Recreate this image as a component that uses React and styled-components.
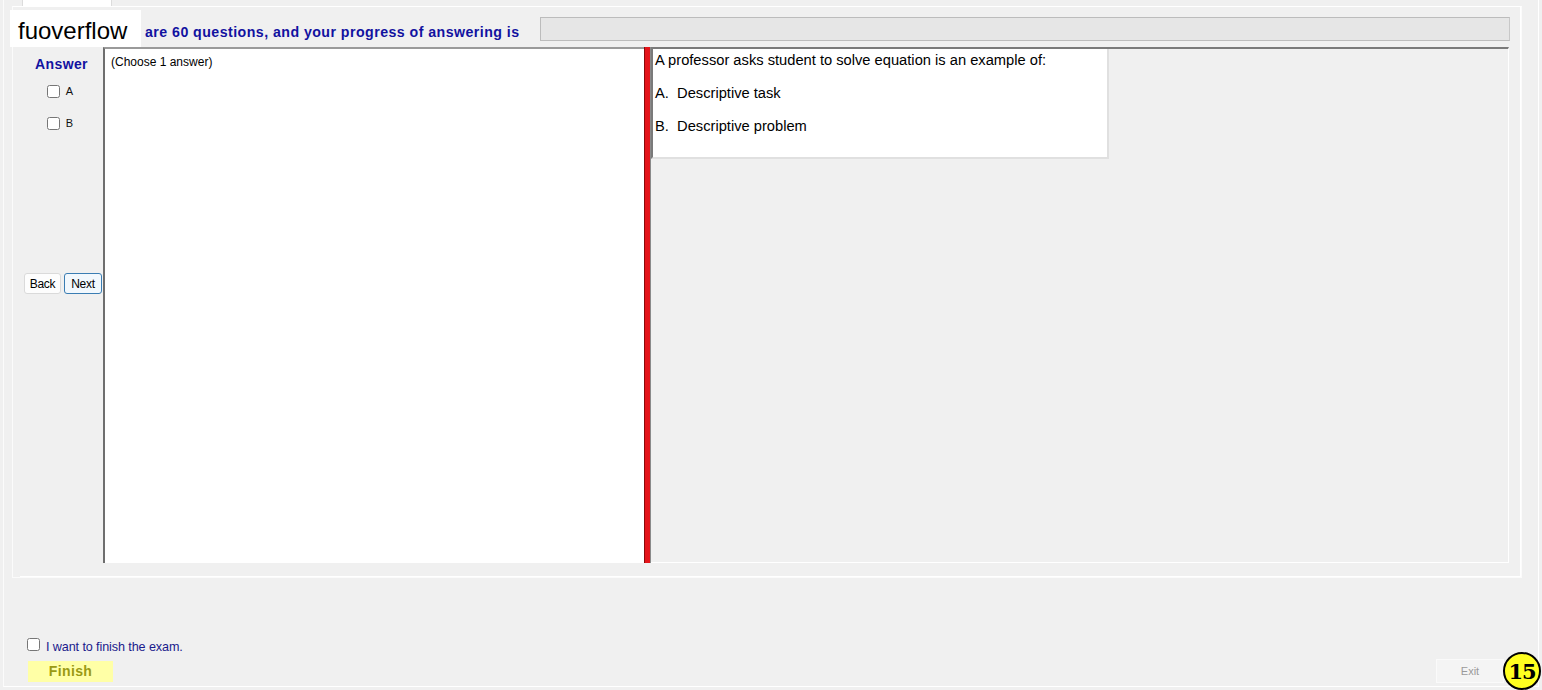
import React from "react";
import styled, { createGlobalStyle } from "styled-components";

const Global = createGlobalStyle`
    html, body {
        margin: 0;
        padding: 0;
        background: #f0f0f0;
        font-family: "Liberation Sans", Arial, sans-serif;
    }
`;

function App() {
    return (
        <Page>
            <Global />
            <Frame>
                <TabStrip>
                    <Tab />
                </TabStrip>
                <TabPanel>
                    <Group>
                        <HeaderRow>
                            <Title>are 60 questions, and your progress of answering is</Title>
                            <Progress />
                        </HeaderRow>
                        <Main>
                            <AnswerColumn>
                                <AnswerLabel>Answer</AnswerLabel>
                                <Choice>
                                    <Box type="checkbox" />
                                    <span>A</span>
                                </Choice>
                                <Choice>
                                    <Box type="checkbox" />
                                    <span>B</span>
                                </Choice>
                                <NavRow>
                                    <NavButton>Back</NavButton>
                                    <NavButton focused>Next</NavButton>
                                </NavRow>
                            </AnswerColumn>
                            <AnswerBox>(Choose 1 answer)</AnswerBox>
                            <Splitter />
                            <QuestionPane>
                                <QuestionBox>
                                    <QLine>A professor asks student to solve equation is an example of:</QLine>
                                    <QLine>A.&nbsp;&nbsp;Descriptive task</QLine>
                                    <QLine>B.&nbsp;&nbsp;Descriptive problem</QLine>
                                </QuestionBox>
                            </QuestionPane>
                        </Main>
                    </Group>
                </TabPanel>
                <Footer>
                    <FinishCheck>
                        <Box type="checkbox" />
                        <span>I want to finish the exam.</span>
                    </FinishCheck>
                    <FooterRow>
                        <FinishButton>Finish</FinishButton>
                        <ExitButton>Exit</ExitButton>
                    </FooterRow>
                </Footer>
            </Frame>
            <Watermark>fuoverflow</Watermark>
            <Badge>15</Badge>
        </Page>
    );
}

export default App;

const Page = styled.div`
    position: relative;
    width: 1542px;
    height: 690px;
    background: #f0f0f0;
    overflow: hidden;
`;

const Frame = styled.div`
    margin-left: 3px;
    width: 1534px;
    height: 686px;
    border-left: 1px solid #fbfbfb;
    border-right: 1px solid #ffffff;
    border-bottom: 1px solid #ffffff;
    display: flex;
    flex-direction: column;
`;

const TabStrip = styled.div`
    height: 6px;
    padding-left: 18px;
    display: flex;
`;

const Tab = styled.div`
    width: 88px;
    height: 6px;
    background: #ffffff;
    border-left: 1px solid #dcdcdc;
    border-right: 1px solid #dcdcdc;
`;

const TabPanel = styled.div`
    margin-left: 8px;
    width: 1508px;
    height: 570px;
    border: 1px solid #fbfbfb;
    border-top-color: #ffffff;
    display: flex;
`;

const Group = styled.div`
    margin-left: 7px;
    flex: 1;
    display: flex;
    flex-direction: column;
    border-bottom: 1px solid #ffffff;
    border-right: 1px solid #ffffff;
`;

const HeaderRow = styled.div`
    height: 40px;
    display: flex;
    align-items: center;
    padding-left: 125px;
`;

const Title = styled.div`
    font-size: 14.2px;
    font-weight: bold;
    letter-spacing: 0.45px;
    color: #1212a0;
    margin-top: 10px;
    width: 395px;
    white-space: nowrap;
`;

const Progress = styled.div`
    margin-top: 4px;
    width: 968px;
    height: 22px;
    background: #e6e6e6;
    border: 1px solid #bcbcbc;
    border-right-color: #c8c8c8;
`;

const Main = styled.div`
    display: flex;
    height: 516px;
    margin-right: 11px;
`;

const AnswerColumn = styled.div`
    width: 83px;
    display: flex;
    flex-direction: column;
    align-items: center;
`;

const AnswerLabel = styled.div`
    margin-top: 9px;
    font-size: 14px;
    font-weight: bold;
    letter-spacing: 0.4px;
    color: #1212a0;
`;

const Box = styled.input`
    width: 13px;
    height: 13px;
    margin: 0;
`;

const Choice = styled.label`
    display: flex;
    align-items: center;
    gap: 6px;
    font-size: 11px;
    color: #111;
    margin-top: 9px;
    height: 20px;
    margin-right: 3px;
    & + & {
        margin-top: 12px;
    }
`;

const NavRow = styled.div`
    margin-top: 140px;
    display: flex;
    gap: 3px;
    align-self: flex-start;
    padding-left: 4px;
`;

const NavButton = styled.button`
    height: 21px;
    padding: 0 4px;
    font-family: "Liberation Sans", Arial, sans-serif;
    font-size: 12px;
    letter-spacing: -0.3px;
    color: #000;
    background: ${(p) => (p.focused ? "#f2f8fd" : "#fdfdfd")};
    border: 1px solid ${(p) => (p.focused ? "#3a7db3" : "#dadada")};
    border-radius: 3px;
    width: ${(p) => (p.focused ? "38px" : "37px")};
`;

const AnswerBox = styled.div`
    background: #ffffff;
    border-left: 2px solid #6e6e6e;
    border-top: 2px solid #9a9a9a;
    padding: 6px 0 0 6px;
    font-size: 12px;
    color: #000;
    box-sizing: border-box;
    width: 541px;
`;

const Splitter = styled.div`
    width: 7px;
    background: #e4141a;
    border-left: 1px solid #8a0a0a;
    border-right: 1px solid #8a8a8a;
    box-sizing: border-box;
`;

const QuestionPane = styled.div`
    flex: 1;
    border-top: 2px solid #7a7a7a;
    border-right: 1px solid #ffffff;
    border-bottom: 1px solid #ffffff;
`;

const QuestionBox = styled.div`
    background: #ffffff;
    border-left: 2px solid #7a7a7a;
    border-right: 2px solid #e0e0e0;
    border-bottom: 2px solid #e0e0e0;
    padding: 3px 0 0 2px;
    box-sizing: border-box;
    width: 458px;
    height: 110px;
`;

const QLine = styled.div`
    font-size: 14.7px;
    color: #000;
    height: 33px;
    line-height: 17px;
`;

const Footer = styled.div`
    flex: 1;
    display: flex;
    flex-direction: column;
    justify-content: flex-end;
    padding: 0 0 4px 23px;
`;

const FinishCheck = styled.label`
    display: flex;
    align-items: center;
    gap: 6px;
    font-size: 12.6px;
    letter-spacing: -0.1px;
    color: #1a1a8c;
    margin-bottom: 5px;
    span {
        margin-top: 5px;
    }
`;

const FooterRow = styled.div`
    display: flex;
    justify-content: space-between;
    align-items: center;
    padding-right: 34px;
`;

const FinishButton = styled.div`
    width: 85px;
    height: 21px;
    margin-left: 1px;
    background: #ffffa6;
    color: #9a9a14;
    font-size: 14px;
    font-weight: bold;
    letter-spacing: 0.4px;
    display: flex;
    align-items: center;
    justify-content: center;
    margin-top: 1px;
`;

const ExitButton = styled.div`
    width: 66px;
    height: 22px;
    background: #f4f4f4;
    border: 1px solid #fafafa;
    color: #9a9a9a;
    font-size: 11px;
    display: flex;
    align-items: center;
    justify-content: center;
    margin-bottom: -1px;
`;

const Watermark = styled.div`
    position: absolute;
    left: 10px;
    top: 10px;
    width: 131px;
    height: 37px;
    background: #ffffff;
    font-size: 24px;
    color: #000;
    display: flex;
    align-items: center;
    padding: 4px 0 0 8px;
    box-sizing: border-box;
`;

const Badge = styled.div`
    position: absolute;
    left: 1503px;
    top: 652px;
    width: 34px;
    height: 34px;
    border-radius: 50%;
    background: #ffff20;
    border: 2px solid #000;
    font-family: "DejaVu Serif", "Liberation Serif", serif;
    font-weight: bold;
    font-size: 21px;
    color: #000;
    display: flex;
    align-items: center;
    justify-content: center;
    letter-spacing: -1px;
`;
